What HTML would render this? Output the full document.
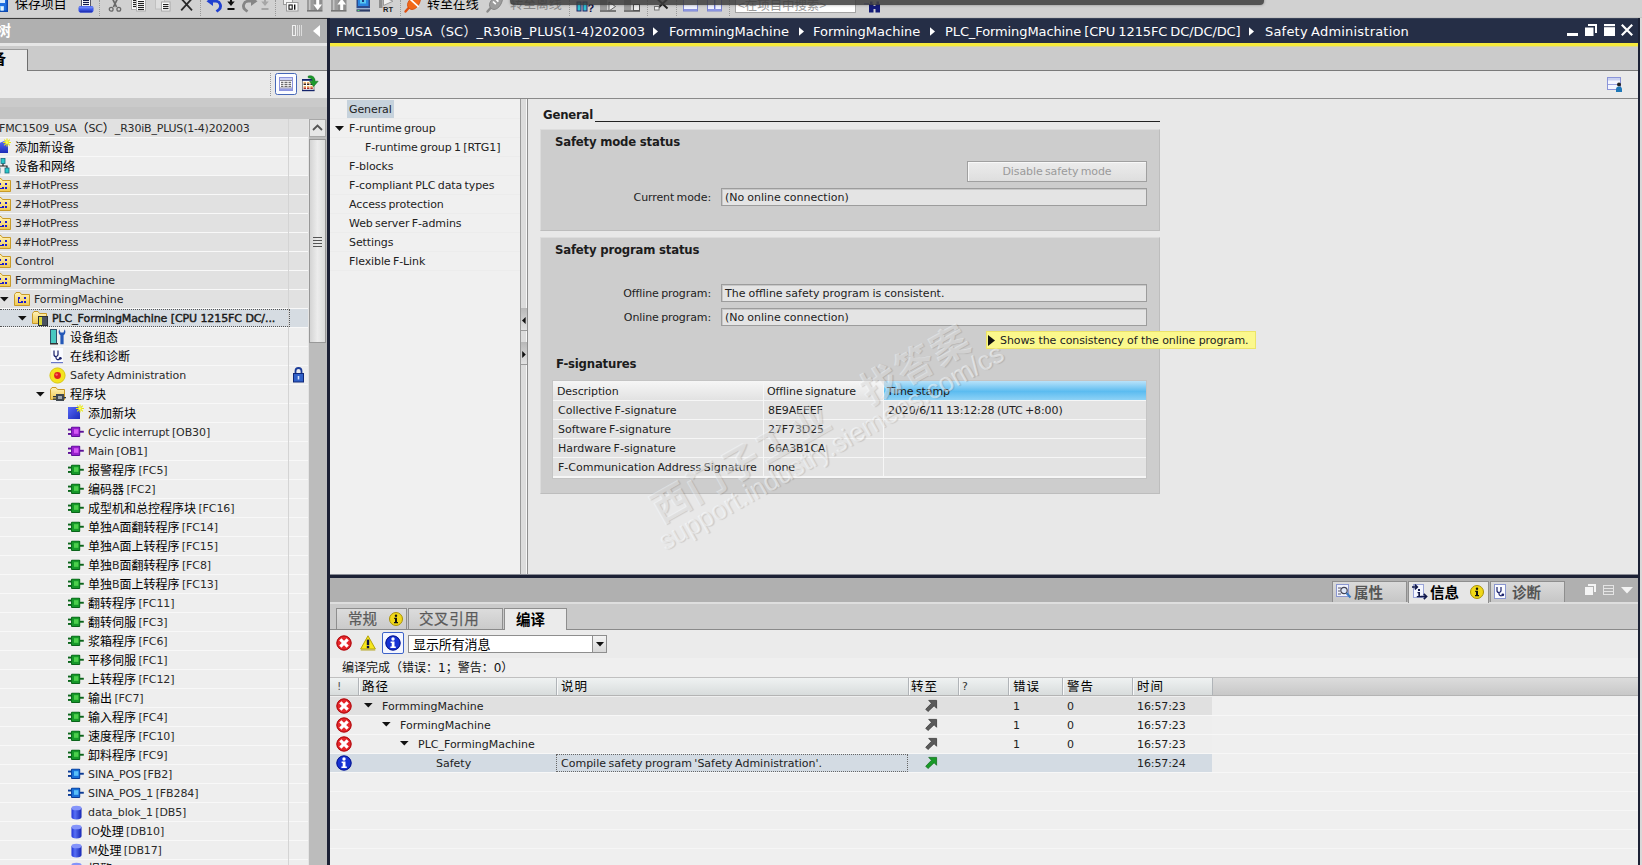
<!DOCTYPE html><html lang="zh"><head><meta charset="utf-8"><title>Safety Administration</title><style>
*{margin:0;padding:0;box-sizing:border-box}
html,body{width:1642px;height:865px;overflow:hidden;background:#e8e8e8}
body{position:relative;font-family:"DejaVu Sans","Liberation Sans","Noto Sans CJK SC",sans-serif;font-size:11px;color:#2a2a2a;line-height:1}
.a{position:absolute}
.t{position:absolute;white-space:pre;line-height:19px;height:19px;letter-spacing:-0.1px;word-spacing:-1px}
.c{font-size:12px;color:#000;position:relative;top:1px;letter-spacing:0;word-spacing:0}
svg{position:absolute;overflow:visible}
.row{position:absolute;left:0;width:308px;height:18px}
.brow{position:absolute;left:331px;width:881px;height:19px}
</style></head><body>
<svg width="0" height="0" style="position:absolute"><defs>
<linearGradient id="gfold" x1="0" y1="0" x2="0" y2="1"><stop offset="0" stop-color="#fff3b8"/><stop offset="1" stop-color="#f0c850"/></linearGradient>
<linearGradient id="gblue" x1="0" y1="0" x2="0" y2="1"><stop offset="0" stop-color="#5a6cf5"/><stop offset="1" stop-color="#1c2cb8"/></linearGradient>
<linearGradient id="gcyl" x1="0" y1="0" x2="1" y2="0"><stop offset="0" stop-color="#2034d8"/><stop offset=".35" stop-color="#5870f4"/><stop offset="1" stop-color="#1626b4"/></linearGradient>
<linearGradient id="ghead" x1="0" y1="0" x2="0" y2="1"><stop offset="0" stop-color="#f4f5f7"/><stop offset=".5" stop-color="#e3e6ea"/><stop offset="1" stop-color="#d4d8de"/></linearGradient>
<symbol id="i-folder" viewBox="0 0 16 16"><path d="M0.5 3.5 L2 1.5 H6 L7.5 3.5 H15.5 V14.5 H0.5 Z" fill="url(#gfold)" stroke="#c89a28" stroke-width="1"/><rect x="4" y="6" width="2" height="2" fill="#1a1ad0"/><rect x="4" y="8" width="1" height="4" fill="#1a1ad0"/><rect x="4" y="11" width="4" height="1" fill="#1a1ad0"/><rect x="7" y="10" width="2" height="2" fill="#1a1ad0"/><rect x="10" y="6" width="2" height="2" fill="#1a1ad0"/><rect x="10" y="10" width="2" height="2" fill="#1a1ad0"/></symbol>
<symbol id="i-plc" viewBox="0 0 16 16"><path d="M0.5 3.5 L2 1.5 H6 L7.5 3.5 H14.5 V13.5 H0.5 Z" fill="url(#gfold)" stroke="#c89a28" stroke-width="1"/><rect x="6" y="6" width="10" height="10" fill="#2b3038"/><rect x="7" y="7" width="3" height="8" fill="#d8d838"/><rect x="10" y="7" width="5" height="8" fill="#4a5260"/></symbol>
<symbol id="i-prog" viewBox="0 0 16 16"><path d="M0.5 3.5 L2 1.5 H6 L7.5 3.5 H14.5 V13.5 H0.5 Z" fill="url(#gfold)" stroke="#c89a28" stroke-width="1"/><rect x="6" y="8" width="8" height="7" fill="#404850"/><rect x="8" y="10" width="4" height="3" fill="#a0a8b0"/><rect x="3" y="10" width="3" height="1.3" fill="#303840"/><rect x="3" y="12.5" width="3" height="1.3" fill="#303840"/><rect x="14" y="11" width="2" height="1.3" fill="#303840"/></symbol>
<symbol id="i-blk" viewBox="0 0 16 12"><rect x="0" y="2.6" width="4" height="1.9" fill="var(--d)"/><rect x="0" y="7" width="4" height="1.9" fill="var(--d)"/><rect x="11.5" y="4.8" width="4.3" height="1.9" fill="var(--d)"/><rect x="3" y="0.8" width="9.2" height="10.2" rx="1" fill="var(--d)"/><rect x="3.8" y="1.4" width="7.6" height="8.6" rx=".6" fill="var(--m)"/><rect x="6" y="3.2" width="4.4" height="4.6" fill="var(--l)"/></symbol>
<symbol id="i-db" viewBox="0 0 12 16"><path d="M0.5 3 V13 A5.5 2.5 0 0 0 11.5 13 V3 Z" fill="url(#gcyl)"/><ellipse cx="6" cy="3" rx="5.5" ry="2.5" fill="#8494fa"/></symbol>
<symbol id="i-star" viewBox="0 0 10 10"><g stroke="#e8e810" stroke-width="1.4"><path d="M5 0V10M0 5H10M1.5 1.5L8.5 8.5M8.5 1.5L1.5 8.5"/></g><circle cx="5" cy="5" r="1.6" fill="#ffff60"/></symbol>
<symbol id="i-err" viewBox="0 0 16 16"><circle cx="8" cy="8" r="7.6" fill="#e6262a"/><circle cx="8" cy="8" r="7.1" fill="none" stroke="#a80c10" stroke-width="1"/><path d="M4.3 4.3L11.7 11.7M11.7 4.3L4.3 11.7" stroke="#fff" stroke-width="3.1"/></symbol>
<symbol id="i-info" viewBox="0 0 16 16"><circle cx="8" cy="8" r="7.6" fill="#1632d4"/><circle cx="8" cy="8" r="7.1" fill="none" stroke="#0a1888" stroke-width="1"/><circle cx="8" cy="4" r="1.7" fill="#fff"/><path d="M5.6 6.6H9.5V11.4H10.8V12.9H5.4V11.4H6.7V8.1H5.6Z" fill="#fff"/></symbol>
<symbol id="i-warn" viewBox="0 0 16 16"><path d="M8 0.8 L15.4 14 H0.6 Z" fill="#f6e61c" stroke="#b4a40c" stroke-width="1" stroke-linejoin="round"/><path d="M1 14.4H15L15.4 15.4H0.6Z" fill="#b8a828"/><rect x="6.8" y="4.6" width="2.4" height="5.6" fill="#0c1040"/><rect x="6.8" y="11" width="2.4" height="2.2" fill="#0c1040"/></symbol>
<symbol id="i-yinfo" viewBox="0 0 14 14"><circle cx="7" cy="7" r="6.5" fill="#f0d818" stroke="#a89008" stroke-width="1"/><circle cx="7" cy="3.8" r="1.2" fill="#111"/><path d="M5.2 5.8H8V10H9V11.2H5V10H6V7H5.2Z" fill="#111"/></symbol>
<symbol id="i-goto" viewBox="0 0 14 14"><path d="M4 1.5 H12.5 V10 L9.8 7.3 L3.2 13.5 L0.8 11 L7 4.6 Z" fill="var(--m)" stroke="var(--d)" stroke-width=".8"/></symbol>
</defs></svg>
<div class="a" style="left:0px;top:0px;width:1642px;height:18px;background:#d1d1d1;"></div>
<div class="a" style="left:0px;top:17px;width:1642px;height:1px;background:#c4c4c4;"></div>
<div class="a" style="left:0px;top:18px;width:327px;height:25px;background:#b0b0b0;"></div>
<div class="a" style="left:0px;top:18px;width:327px;height:1px;background:#3a3a3a;"></div>
<div class="a" style="left:0px;top:43px;width:327px;height:3px;background:#e6e6e6;"></div>
<div class="a" style="left:0px;top:46px;width:327px;height:25px;background:#cbcbcb;"></div>
<div class="a" style="left:0px;top:70px;width:327px;height:1px;background:#7c7c7c;"></div>
<div class="a" style="left:0px;top:49px;width:28px;height:22px;background:#e9e9e9;border-right:1px solid #6e6e6e;border-top:1px solid #9a9a9a"></div>
<div class="a" style="left:0px;top:71px;width:327px;height:27px;background:#e9e9e9;"></div>
<div class="a" style="left:0px;top:98px;width:327px;height:21px;background:#c4c4c4;"></div>
<div class="a" style="left:0px;top:98px;width:327px;height:9px;background:#cacaca;"></div>
<div class="a" style="left:0px;top:119px;width:327px;height:746px;background:#eeeeee;"></div>
<div class="a" style="left:0px;top:119px;width:308px;height:18px;background:#e1e1e1;"></div>
<div class="a" style="left:0px;top:137px;width:308px;height:1px;background:#f8f8f8;"></div>
<span class="t" style="left:-1px;top:119px;letter-spacing:-0.2px">FMC1509_USA<span class="c">（</span>SC<span class="c">）</span>_R30iB_PLUS(1-4)202003</span>
<div class="a" style="left:0px;top:138px;width:308px;height:18px;background:#eeeeee;"></div>
<div class="a" style="left:0px;top:156px;width:308px;height:1px;background:#f8f8f8;"></div>
<svg class="a" style="left:-5px;top:141px" width="14" height="12"><path d="M0 12V4L9 0L13 3V12Z" fill="url(#gblue)"/></svg>
<svg class="a" style="left:3px;top:138px;" width="8" height="9"><use href="#i-star"/></svg>
<span class="t" style="left:15px;top:138px;"><span class="c">添加新设备</span></span>
<div class="a" style="left:0px;top:157px;width:308px;height:18px;background:#eeeeee;"></div>
<div class="a" style="left:0px;top:175px;width:308px;height:1px;background:#f8f8f8;"></div>
<svg class="a" style="left:-5px;top:158px" width="16" height="16"><path d="M8 5V8M3 11V8H12V11" stroke="#222" stroke-width="1.2" fill="none"/><rect x="6" y="0.5" width="4" height="5" fill="#28c8c8" stroke="#1a6a80" stroke-width=".8"/><rect x="1" y="10" width="4" height="5" fill="#28c8c8" stroke="#1a6a80" stroke-width=".8"/><rect x="10" y="10" width="4" height="5" fill="#28c8c8" stroke="#1a6a80" stroke-width=".8"/></svg>
<span class="t" style="left:15px;top:157px;"><span class="c">设备和网络</span></span>
<div class="a" style="left:0px;top:176px;width:308px;height:18px;background:#e1e1e1;"></div>
<div class="a" style="left:0px;top:194px;width:308px;height:1px;background:#f8f8f8;"></div>
<svg class="a" style="left:-5px;top:177px;" width="16" height="16"><use href="#i-folder"/></svg>
<span class="t" style="left:15px;top:176px;">1#HotPress</span>
<div class="a" style="left:0px;top:195px;width:308px;height:18px;background:#e1e1e1;"></div>
<div class="a" style="left:0px;top:213px;width:308px;height:1px;background:#f8f8f8;"></div>
<svg class="a" style="left:-5px;top:196px;" width="16" height="16"><use href="#i-folder"/></svg>
<span class="t" style="left:15px;top:195px;">2#HotPress</span>
<div class="a" style="left:0px;top:214px;width:308px;height:18px;background:#e1e1e1;"></div>
<div class="a" style="left:0px;top:232px;width:308px;height:1px;background:#f8f8f8;"></div>
<svg class="a" style="left:-5px;top:215px;" width="16" height="16"><use href="#i-folder"/></svg>
<span class="t" style="left:15px;top:214px;">3#HotPress</span>
<div class="a" style="left:0px;top:233px;width:308px;height:18px;background:#e1e1e1;"></div>
<div class="a" style="left:0px;top:251px;width:308px;height:1px;background:#f8f8f8;"></div>
<svg class="a" style="left:-5px;top:234px;" width="16" height="16"><use href="#i-folder"/></svg>
<span class="t" style="left:15px;top:233px;">4#HotPress</span>
<div class="a" style="left:0px;top:252px;width:308px;height:18px;background:#e1e1e1;"></div>
<div class="a" style="left:0px;top:270px;width:308px;height:1px;background:#f8f8f8;"></div>
<svg class="a" style="left:-5px;top:253px;" width="16" height="16"><use href="#i-folder"/></svg>
<span class="t" style="left:15px;top:252px;">Control</span>
<div class="a" style="left:0px;top:271px;width:308px;height:18px;background:#e1e1e1;"></div>
<div class="a" style="left:0px;top:289px;width:308px;height:1px;background:#f8f8f8;"></div>
<svg class="a" style="left:-5px;top:272px;" width="16" height="16"><use href="#i-folder"/></svg>
<span class="t" style="left:15px;top:271px;">FormmingMachine</span>
<div class="a" style="left:0px;top:290px;width:308px;height:18px;background:#e1e1e1;"></div>
<div class="a" style="left:0px;top:308px;width:308px;height:1px;background:#f8f8f8;"></div>
<svg class="a" style="left:0px;top:297px" width="9" height="5"><path d="M0 0H8.6L4.3 4.6Z" fill="#111"/></svg>
<svg class="a" style="left:14px;top:291px;" width="16" height="16"><use href="#i-folder"/></svg>
<span class="t" style="left:34px;top:290px;">FormingMachine</span>
<div class="a" style="left:0px;top:309px;width:308px;height:18px;background:#d6dce2;"></div>
<div class="a" style="left:0px;top:327px;width:308px;height:1px;background:#f8f8f8;"></div>
<div class="a" style="left:0px;top:309px;width:290px;height:18px;background:transparent;border:1px dotted #555;border-left:none"></div>
<svg class="a" style="left:18px;top:316px" width="9" height="5"><path d="M0 0H8.6L4.3 4.6Z" fill="#111"/></svg>
<svg class="a" style="left:32px;top:310px;" width="16" height="16"><use href="#i-plc"/></svg>
<span class="t" style="left:52px;top:309px;color:#1a1a1a;-webkit-text-stroke:0.45px #1a1a1a;letter-spacing:-0.08px;word-spacing:0">PLC_FormingMachine [CPU 1215FC DC/...</span>
<div class="a" style="left:0px;top:328px;width:308px;height:18px;background:#eeeeee;"></div>
<div class="a" style="left:0px;top:346px;width:308px;height:1px;background:#f8f8f8;"></div>
<svg class="a" style="left:50px;top:329px" width="16" height="16"><rect x="0.5" y="0.5" width="6" height="14" fill="#48c8c0" stroke="#30506a" stroke-width="1"/><rect x="0" y="14" width="8" height="1.5" fill="#333"/><path d="M9.3 0.3C8 2.6 8.6 5.2 10.4 6.2V15.2H13.6V6.2C15.4 5.2 16 2.6 14.7 0.3L13.5 3.4H10.5Z" fill="#2458b8"/></svg>
<span class="t" style="left:70px;top:328px;"><span class="c">设备组态</span></span>
<div class="a" style="left:0px;top:347px;width:308px;height:18px;background:#eeeeee;"></div>
<div class="a" style="left:0px;top:365px;width:308px;height:1px;background:#f8f8f8;"></div>
<svg class="a" style="left:51px;top:348px" width="13" height="16"><rect x="0" y="0" width="12" height="14.5" fill="#fafbff"/><rect x="0" y="14" width="12" height="1.2" fill="#6a78c8"/><path d="M3 2.5V6.5A2 2 0 0 0 7 6.5V2.5M5 8.5V10A2 2 0 0 0 8.5 11" stroke="#18206a" stroke-width="1.2" fill="none"/><circle cx="9.3" cy="10.3" r="1.4" fill="#18206a"/></svg>
<span class="t" style="left:70px;top:347px;"><span class="c">在线和诊断</span></span>
<div class="a" style="left:0px;top:366px;width:308px;height:18px;background:#eeeeee;"></div>
<div class="a" style="left:0px;top:384px;width:308px;height:1px;background:#f8f8f8;"></div>
<svg class="a" style="left:49px;top:367px" width="17" height="17"><circle cx="8.5" cy="8.5" r="7.6" fill="#f4e420" stroke="#d8c810" stroke-width="1"/><circle cx="8.5" cy="8.5" r="3.4" fill="#e02020"/><circle cx="7.6" cy="7.6" r="1.2" fill="#ff7060"/></svg>
<span class="t" style="left:70px;top:366px;">Safety Administration</span>
<div class="a" style="left:0px;top:385px;width:308px;height:18px;background:#eeeeee;"></div>
<div class="a" style="left:0px;top:403px;width:308px;height:1px;background:#f8f8f8;"></div>
<svg class="a" style="left:36px;top:392px" width="9" height="5"><path d="M0 0H8.6L4.3 4.6Z" fill="#111"/></svg>
<svg class="a" style="left:50px;top:386px;" width="16" height="16"><use href="#i-prog"/></svg>
<span class="t" style="left:70px;top:385px;"><span class="c">程序块</span></span>
<div class="a" style="left:0px;top:404px;width:308px;height:18px;background:#eeeeee;"></div>
<div class="a" style="left:0px;top:422px;width:308px;height:1px;background:#f8f8f8;"></div>
<div class="a" style="left:68px;top:407px;width:12px;height:12px;background:linear-gradient(135deg,#5668f8,#1c2cb8);"></div>
<svg class="a" style="left:76px;top:404px;" width="8" height="9"><use href="#i-star"/></svg>
<span class="t" style="left:88px;top:404px;"><span class="c">添加新块</span></span>
<div class="a" style="left:0px;top:423px;width:308px;height:18px;background:#eeeeee;"></div>
<div class="a" style="left:0px;top:441px;width:308px;height:1px;background:#f8f8f8;"></div>
<svg class="a" style="left:68px;top:426px;--d:#5c1098;--m:#9620cc;--l:#d458f4" width="16" height="12"><use href="#i-blk"/></svg>
<span class="t" style="left:88px;top:423px;">Cyclic interrupt [OB30]</span>
<div class="a" style="left:0px;top:442px;width:308px;height:18px;background:#eeeeee;"></div>
<div class="a" style="left:0px;top:460px;width:308px;height:1px;background:#f8f8f8;"></div>
<svg class="a" style="left:68px;top:445px;--d:#5c1098;--m:#9620cc;--l:#d458f4" width="16" height="12"><use href="#i-blk"/></svg>
<span class="t" style="left:88px;top:442px;">Main [OB1]</span>
<div class="a" style="left:0px;top:461px;width:308px;height:18px;background:#eeeeee;"></div>
<div class="a" style="left:0px;top:479px;width:308px;height:1px;background:#f8f8f8;"></div>
<svg class="a" style="left:68px;top:464px;--d:#0a641a;--m:#16982a;--l:#4cd04c" width="16" height="12"><use href="#i-blk"/></svg>
<span class="t" style="left:88px;top:461px;"><span class="c">报警程序</span> [FC5]</span>
<div class="a" style="left:0px;top:480px;width:308px;height:18px;background:#eeeeee;"></div>
<div class="a" style="left:0px;top:498px;width:308px;height:1px;background:#f8f8f8;"></div>
<svg class="a" style="left:68px;top:483px;--d:#0a641a;--m:#16982a;--l:#4cd04c" width="16" height="12"><use href="#i-blk"/></svg>
<span class="t" style="left:88px;top:480px;"><span class="c">编码器</span> [FC2]</span>
<div class="a" style="left:0px;top:499px;width:308px;height:18px;background:#eeeeee;"></div>
<div class="a" style="left:0px;top:517px;width:308px;height:1px;background:#f8f8f8;"></div>
<svg class="a" style="left:68px;top:502px;--d:#0a641a;--m:#16982a;--l:#4cd04c" width="16" height="12"><use href="#i-blk"/></svg>
<span class="t" style="left:88px;top:499px;"><span class="c">成型机和总控程序块</span> [FC16]</span>
<div class="a" style="left:0px;top:518px;width:308px;height:18px;background:#eeeeee;"></div>
<div class="a" style="left:0px;top:536px;width:308px;height:1px;background:#f8f8f8;"></div>
<svg class="a" style="left:68px;top:521px;--d:#0a641a;--m:#16982a;--l:#4cd04c" width="16" height="12"><use href="#i-blk"/></svg>
<span class="t" style="left:88px;top:518px;"><span class="c">单独</span>A<span class="c">面翻转程序</span> [FC14]</span>
<div class="a" style="left:0px;top:537px;width:308px;height:18px;background:#eeeeee;"></div>
<div class="a" style="left:0px;top:555px;width:308px;height:1px;background:#f8f8f8;"></div>
<svg class="a" style="left:68px;top:540px;--d:#0a641a;--m:#16982a;--l:#4cd04c" width="16" height="12"><use href="#i-blk"/></svg>
<span class="t" style="left:88px;top:537px;"><span class="c">单独</span>A<span class="c">面上转程序</span> [FC15]</span>
<div class="a" style="left:0px;top:556px;width:308px;height:18px;background:#eeeeee;"></div>
<div class="a" style="left:0px;top:574px;width:308px;height:1px;background:#f8f8f8;"></div>
<svg class="a" style="left:68px;top:559px;--d:#0a641a;--m:#16982a;--l:#4cd04c" width="16" height="12"><use href="#i-blk"/></svg>
<span class="t" style="left:88px;top:556px;"><span class="c">单独</span>B<span class="c">面翻转程序</span> [FC8]</span>
<div class="a" style="left:0px;top:575px;width:308px;height:18px;background:#eeeeee;"></div>
<div class="a" style="left:0px;top:593px;width:308px;height:1px;background:#f8f8f8;"></div>
<svg class="a" style="left:68px;top:578px;--d:#0a641a;--m:#16982a;--l:#4cd04c" width="16" height="12"><use href="#i-blk"/></svg>
<span class="t" style="left:88px;top:575px;"><span class="c">单独</span>B<span class="c">面上转程序</span> [FC13]</span>
<div class="a" style="left:0px;top:594px;width:308px;height:18px;background:#eeeeee;"></div>
<div class="a" style="left:0px;top:612px;width:308px;height:1px;background:#f8f8f8;"></div>
<svg class="a" style="left:68px;top:597px;--d:#0a641a;--m:#16982a;--l:#4cd04c" width="16" height="12"><use href="#i-blk"/></svg>
<span class="t" style="left:88px;top:594px;"><span class="c">翻转程序</span> [FC11]</span>
<div class="a" style="left:0px;top:613px;width:308px;height:18px;background:#eeeeee;"></div>
<div class="a" style="left:0px;top:631px;width:308px;height:1px;background:#f8f8f8;"></div>
<svg class="a" style="left:68px;top:616px;--d:#0a641a;--m:#16982a;--l:#4cd04c" width="16" height="12"><use href="#i-blk"/></svg>
<span class="t" style="left:88px;top:613px;"><span class="c">翻转伺服</span> [FC3]</span>
<div class="a" style="left:0px;top:632px;width:308px;height:18px;background:#eeeeee;"></div>
<div class="a" style="left:0px;top:650px;width:308px;height:1px;background:#f8f8f8;"></div>
<svg class="a" style="left:68px;top:635px;--d:#0a641a;--m:#16982a;--l:#4cd04c" width="16" height="12"><use href="#i-blk"/></svg>
<span class="t" style="left:88px;top:632px;"><span class="c">浆箱程序</span> [FC6]</span>
<div class="a" style="left:0px;top:651px;width:308px;height:18px;background:#eeeeee;"></div>
<div class="a" style="left:0px;top:669px;width:308px;height:1px;background:#f8f8f8;"></div>
<svg class="a" style="left:68px;top:654px;--d:#0a641a;--m:#16982a;--l:#4cd04c" width="16" height="12"><use href="#i-blk"/></svg>
<span class="t" style="left:88px;top:651px;"><span class="c">平移伺服</span> [FC1]</span>
<div class="a" style="left:0px;top:670px;width:308px;height:18px;background:#eeeeee;"></div>
<div class="a" style="left:0px;top:688px;width:308px;height:1px;background:#f8f8f8;"></div>
<svg class="a" style="left:68px;top:673px;--d:#0a641a;--m:#16982a;--l:#4cd04c" width="16" height="12"><use href="#i-blk"/></svg>
<span class="t" style="left:88px;top:670px;"><span class="c">上转程序</span> [FC12]</span>
<div class="a" style="left:0px;top:689px;width:308px;height:18px;background:#eeeeee;"></div>
<div class="a" style="left:0px;top:707px;width:308px;height:1px;background:#f8f8f8;"></div>
<svg class="a" style="left:68px;top:692px;--d:#0a641a;--m:#16982a;--l:#4cd04c" width="16" height="12"><use href="#i-blk"/></svg>
<span class="t" style="left:88px;top:689px;"><span class="c">输出</span> [FC7]</span>
<div class="a" style="left:0px;top:708px;width:308px;height:18px;background:#eeeeee;"></div>
<div class="a" style="left:0px;top:726px;width:308px;height:1px;background:#f8f8f8;"></div>
<svg class="a" style="left:68px;top:711px;--d:#0a641a;--m:#16982a;--l:#4cd04c" width="16" height="12"><use href="#i-blk"/></svg>
<span class="t" style="left:88px;top:708px;"><span class="c">输入程序</span> [FC4]</span>
<div class="a" style="left:0px;top:727px;width:308px;height:18px;background:#eeeeee;"></div>
<div class="a" style="left:0px;top:745px;width:308px;height:1px;background:#f8f8f8;"></div>
<svg class="a" style="left:68px;top:730px;--d:#0a641a;--m:#16982a;--l:#4cd04c" width="16" height="12"><use href="#i-blk"/></svg>
<span class="t" style="left:88px;top:727px;"><span class="c">速度程序</span> [FC10]</span>
<div class="a" style="left:0px;top:746px;width:308px;height:18px;background:#eeeeee;"></div>
<div class="a" style="left:0px;top:764px;width:308px;height:1px;background:#f8f8f8;"></div>
<svg class="a" style="left:68px;top:749px;--d:#0a641a;--m:#16982a;--l:#4cd04c" width="16" height="12"><use href="#i-blk"/></svg>
<span class="t" style="left:88px;top:746px;"><span class="c">卸料程序</span> [FC9]</span>
<div class="a" style="left:0px;top:765px;width:308px;height:18px;background:#eeeeee;"></div>
<div class="a" style="left:0px;top:783px;width:308px;height:1px;background:#f8f8f8;"></div>
<svg class="a" style="left:68px;top:768px;--d:#0a3a94;--m:#1870d8;--l:#58c0fa" width="16" height="12"><use href="#i-blk"/></svg>
<span class="t" style="left:88px;top:765px;">SINA_POS [FB2]</span>
<div class="a" style="left:0px;top:784px;width:308px;height:18px;background:#eeeeee;"></div>
<div class="a" style="left:0px;top:802px;width:308px;height:1px;background:#f8f8f8;"></div>
<svg class="a" style="left:68px;top:787px;--d:#0a3a94;--m:#1870d8;--l:#58c0fa" width="16" height="12"><use href="#i-blk"/></svg>
<span class="t" style="left:88px;top:784px;">SINA_POS_1 [FB284]</span>
<div class="a" style="left:0px;top:803px;width:308px;height:18px;background:#eeeeee;"></div>
<div class="a" style="left:0px;top:821px;width:308px;height:1px;background:#f8f8f8;"></div>
<svg class="a" style="left:71px;top:805px;" width="11" height="15"><use href="#i-db"/></svg>
<span class="t" style="left:88px;top:803px;">data_blok_1 [DB5]</span>
<div class="a" style="left:0px;top:822px;width:308px;height:18px;background:#eeeeee;"></div>
<div class="a" style="left:0px;top:840px;width:308px;height:1px;background:#f8f8f8;"></div>
<svg class="a" style="left:71px;top:824px;" width="11" height="15"><use href="#i-db"/></svg>
<span class="t" style="left:88px;top:822px;">IO<span class="c">处理</span> [DB10]</span>
<div class="a" style="left:0px;top:841px;width:308px;height:18px;background:#eeeeee;"></div>
<div class="a" style="left:0px;top:859px;width:308px;height:1px;background:#f8f8f8;"></div>
<svg class="a" style="left:71px;top:843px;" width="11" height="15"><use href="#i-db"/></svg>
<span class="t" style="left:88px;top:841px;">M<span class="c">处理</span> [DB17]</span>
<div class="a" style="left:0px;top:860px;width:308px;height:18px;background:#eeeeee;"></div>
<div class="a" style="left:0px;top:878px;width:308px;height:1px;background:#f8f8f8;"></div>
<svg class="a" style="left:71px;top:862px;" width="11" height="15"><use href="#i-db"/></svg>
<span class="t" style="left:88px;top:860px;"><span class="c">报警</span> [DB1]</span>
<div class="a" style="left:288px;top:119px;width:1px;height:746px;background:#d4d4d4;"></div>
<svg class="a" style="left:293px;top:366px" width="11" height="17"><path d="M2.5 8V5A3 3 0 0 1 8.5 5V8" stroke="#1c3c98" stroke-width="1.8" fill="none"/><rect x="0.5" y="7.5" width="10" height="8.5" fill="#3060c8" stroke="#102878" stroke-width="1"/><rect x="4.7" y="10" width="1.6" height="3.5" fill="#cfe0ff"/></svg>
<div class="a" style="left:308px;top:119px;width:19px;height:746px;background:#bcbcbc;"></div>
<div class="a" style="left:308px;top:119px;width:1px;height:746px;background:#e4e4e4;"></div>
<div class="a" style="left:309px;top:119px;width:17px;height:18px;background:#e6e6e6;border:1px solid #a8a8a8"></div>
<svg class="a" style="left:312px;top:124px" width="11" height="7"><path d="M1 6L5.5 1.5L10 6" stroke="#555" stroke-width="1.8" fill="none"/></svg>
<div class="a" style="left:309px;top:139px;width:17px;height:204px;background:linear-gradient(90deg,#d4d4d4,#ececec 50%,#dcdcdc);border:1px solid #989898"></div>
<div class="a" style="left:313px;top:237px;width:9px;height:1px;background:#555;"></div>
<div class="a" style="left:313px;top:240px;width:9px;height:1px;background:#555;"></div>
<div class="a" style="left:313px;top:243px;width:9px;height:1px;background:#555;"></div>
<div class="a" style="left:313px;top:246px;width:9px;height:1px;background:#555;"></div>
<div class="a" style="left:327px;top:18px;width:3px;height:847px;background:#1c2135;"></div>
<div class="a" style="left:330px;top:18px;width:1308px;height:25px;background:#252e46;"></div>
<div class="a" style="left:330px;top:18px;width:1308px;height:1px;background:#3a4358;"></div>
<div class="a" style="left:330px;top:43px;width:1308px;height:3px;background:#f6ea3c;"></div>
<div class="a" style="left:330px;top:46px;width:1308px;height:1px;background:#dcd890;"></div>
<div class="a" style="left:330px;top:47px;width:1308px;height:23px;background:#cbcbcb;"></div>
<div class="a" style="left:330px;top:70px;width:1308px;height:1px;background:#7a7a7a;"></div>
<div class="a" style="left:330px;top:71px;width:1308px;height:27px;background:#e9e9e9;"></div>
<div class="a" style="left:330px;top:98px;width:1308px;height:1px;background:#8a8a8a;"></div>
<div class="a" style="left:330px;top:99px;width:1308px;height:475px;background:#e8e8e8;"></div>
<div class="a" style="left:1638px;top:18px;width:2px;height:847px;background:#1c2135;"></div>
<div class="a" style="left:1640px;top:18px;width:2px;height:847px;background:#d8d8d8;"></div>
<span class="t" style="left:336px;top:19px;font-size:13px;color:#fff;line-height:25px;height:25px;letter-spacing:0.2px">FMC1509_USA<span style="font-size:13px">（</span>SC<span style="font-size:13px">）</span>_R30iB_PLUS(1-4)202003</span>
<span class="t" style="left:669px;top:19px;font-size:13px;color:#fff;line-height:25px;height:25px;letter-spacing:0px">FormmingMachine</span>
<span class="t" style="left:813px;top:19px;font-size:13px;color:#fff;line-height:25px;height:25px;letter-spacing:0px">FormingMachine</span>
<span class="t" style="left:945px;top:19px;font-size:13px;color:#fff;line-height:25px;height:25px;letter-spacing:-0.1px">PLC_FormingMachine [CPU 1215FC DC/DC/DC]</span>
<span class="t" style="left:1265px;top:19px;font-size:13px;color:#fff;line-height:25px;height:25px;letter-spacing:0.2px">Safety Administration</span>
<svg class="a" style="left:653px;top:27px" width="6" height="9"><path d="M0 0.3L5 4.5L0 8.7Z" fill="#fff"/></svg>
<svg class="a" style="left:799px;top:27px" width="6" height="9"><path d="M0 0.3L5 4.5L0 8.7Z" fill="#fff"/></svg>
<svg class="a" style="left:930px;top:27px" width="6" height="9"><path d="M0 0.3L5 4.5L0 8.7Z" fill="#fff"/></svg>
<svg class="a" style="left:1249px;top:27px" width="6" height="9"><path d="M0 0.3L5 4.5L0 8.7Z" fill="#fff"/></svg>
<div class="a" style="left:1567px;top:33px;width:11px;height:3px;background:#fff;"></div>
<svg class="a" style="left:1585px;top:24px" width="12" height="12"><path d="M3 0H12V9H10V2H3Z" fill="#fff"/><rect x="0" y="3.5" width="8.5" height="8.5" fill="#fff"/></svg>
<svg class="a" style="left:1604px;top:24px" width="12" height="12"><rect x="0" y="0" width="11" height="12" fill="#fff"/><rect x="0" y="2.2" width="11" height="1" fill="#252e46"/></svg>
<svg class="a" style="left:1621px;top:24px" width="12" height="12"><path d="M0.8 0.8L11.2 11.2M11.2 0.8L0.8 11.2" stroke="#fff" stroke-width="2.2"/></svg>
<svg class="a" style="left:1607px;top:77px" width="16" height="16"><rect x="0.5" y="0.5" width="13" height="12" fill="#f4f6ff" stroke="#8a94d8" stroke-width="1"/><rect x="1" y="1" width="12" height="2.5" fill="#c8d0f0"/><rect x="1" y="7" width="12" height="1" fill="#9aa4e0"/><circle cx="12" cy="7.5" r="2" fill="#222"/><path d="M9 15V12.5A3 3 0 0 1 15 12.5V15Z" fill="#1e78b8"/></svg>
<div class="a" style="left:330px;top:99px;width:190px;height:475px;background:#f0f0f0;"></div>
<div class="a" style="left:330px;top:118px;width:190px;height:1px;background:#ececec;"></div>
<div class="a" style="left:330px;top:137px;width:190px;height:1px;background:#ececec;"></div>
<div class="a" style="left:330px;top:156px;width:190px;height:1px;background:#ececec;"></div>
<div class="a" style="left:330px;top:175px;width:190px;height:1px;background:#ececec;"></div>
<div class="a" style="left:330px;top:194px;width:190px;height:1px;background:#ececec;"></div>
<div class="a" style="left:330px;top:213px;width:190px;height:1px;background:#ececec;"></div>
<div class="a" style="left:330px;top:232px;width:190px;height:1px;background:#ececec;"></div>
<div class="a" style="left:330px;top:251px;width:190px;height:1px;background:#ececec;"></div>
<div class="a" style="left:330px;top:270px;width:190px;height:1px;background:#ececec;"></div>
<div class="a" style="left:347px;top:100px;width:47px;height:18px;background:#c6d2dc;"></div>
<span class="t " style="left:349px;top:100px;color:#222">General</span>
<span class="t " style="left:349px;top:119px;color:#222">F-runtime group</span>
<span class="t " style="left:365px;top:138px;color:#222">F-runtime group 1 [RTG1]</span>
<span class="t " style="left:349px;top:157px;color:#222">F-blocks</span>
<span class="t " style="left:349px;top:176px;color:#222">F-compliant PLC data types</span>
<span class="t " style="left:349px;top:195px;color:#222">Access protection</span>
<span class="t " style="left:349px;top:214px;color:#222">Web server F-admins</span>
<span class="t " style="left:349px;top:233px;color:#222">Settings</span>
<span class="t " style="left:349px;top:252px;color:#222">Flexible F-Link</span>
<svg class="a" style="left:335px;top:126px" width="9" height="5"><path d="M0 0H9L4.5 5Z" fill="#111"/></svg>
<div class="a" style="left:520px;top:99px;width:8px;height:475px;background:#dcdcdc;border-left:1px solid #9a9a9a;border-right:1px solid #8e8e8e"></div>
<div class="a" style="left:526px;top:99px;width:1px;height:475px;background:#f6f6f6;"></div>
<div class="a" style="left:521px;top:308px;width:6px;height:23px;background:linear-gradient(#b8b8b8,#e2e2e2);border-bottom:1px solid #9a9a9a"></div>
<svg class="a" style="left:522px;top:317px" width="4" height="7"><path d="M3.6 0V7L0 3.5Z" fill="#111"/></svg>
<div class="a" style="left:521px;top:342px;width:6px;height:23px;background:linear-gradient(#b8b8b8,#e2e2e2);border-bottom:1px solid #9a9a9a"></div>
<svg class="a" style="left:522px;top:351px" width="4" height="7"><path d="M0.2 0V7L3.8 3.5Z" fill="#111"/></svg>
<span class="t" style="left:543px;top:105px;font-size:13px;font-weight:bold;color:#1c1c1c;font-family:DejaVu Sans Condensed,Liberation Sans,sans-serif;letter-spacing:-0.2px">General</span>
<div class="a" style="left:595px;top:121px;width:565px;height:1px;background:#222;"></div>
<div class="a" style="left:540px;top:129px;width:620px;height:102px;background:#cdcdcd;border:1px solid #bdbdbd;border-top-color:#dcdcdc;border-left-color:#dcdcdc"></div>
<div class="a" style="left:540px;top:237px;width:620px;height:257px;background:#cdcdcd;border:1px solid #bdbdbd;border-top-color:#dcdcdc;border-left-color:#dcdcdc"></div>
<span class="t" style="left:555px;top:132px;font-size:13px;font-weight:bold;color:#1c1c1c;font-family:DejaVu Sans Condensed,Liberation Sans,sans-serif;letter-spacing:-0.2px;word-spacing:0">Safety mode status</span>
<span class="t" style="left:555px;top:240px;font-size:13px;font-weight:bold;color:#1c1c1c;font-family:DejaVu Sans Condensed,Liberation Sans,sans-serif;letter-spacing:-0.2px;word-spacing:0">Safety program status</span>
<span class="t" style="left:556px;top:354px;font-size:13px;font-weight:bold;color:#1c1c1c;font-family:DejaVu Sans Condensed,Liberation Sans,sans-serif;letter-spacing:-0.2px;word-spacing:0">F-signatures</span>
<div class="a" style="left:967px;top:161px;width:180px;height:21px;background:linear-gradient(#ececec,#dedede);border:1px solid #a0a0a0;box-shadow:inset 1px 1px 0 #f8f8f8"></div>
<span class="t" style="left:967px;top:162px;width:180px;text-align:center;color:#9a9a9a">Disable safety mode</span>
<div class="a" style="left:721px;top:188px;width:426px;height:18px;background:#e4e4e4;border:1px solid #9c9c9c;box-shadow:inset 1px 1px 0 #c8c8c8"></div>
<span class="t" style="left:510px;width:201px;text-align:right;top:188px;color:#222">Current mode:</span>
<span class="t " style="left:725px;top:188px;color:#222;letter-spacing:0;word-spacing:-.5px">(No online connection)</span>
<div class="a" style="left:721px;top:284px;width:426px;height:18px;background:#e4e4e4;border:1px solid #9c9c9c;box-shadow:inset 1px 1px 0 #c8c8c8"></div>
<span class="t" style="left:510px;width:201px;text-align:right;top:284px;color:#222">Offline program:</span>
<span class="t " style="left:725px;top:284px;color:#222;letter-spacing:0;word-spacing:-.5px">The offline safety program is consistent.</span>
<div class="a" style="left:721px;top:308px;width:426px;height:18px;background:#e4e4e4;border:1px solid #9c9c9c;box-shadow:inset 1px 1px 0 #c8c8c8"></div>
<span class="t" style="left:510px;width:201px;text-align:right;top:308px;color:#222">Online program:</span>
<span class="t " style="left:725px;top:308px;color:#222;letter-spacing:0;word-spacing:-.5px">(No online connection)</span>
<div class="a" style="left:552px;top:380px;width:595px;height:99px;background:#f6f6f6;border:1px solid #c4c4c4"></div>
<div class="a" style="left:553px;top:381px;width:210px;height:19px;background:linear-gradient(#f6f6f6,#e2e2e2);"></div>
<div class="a" style="left:764px;top:381px;width:119px;height:19px;background:linear-gradient(#f6f6f6,#e2e2e2);"></div>
<div class="a" style="left:884px;top:381px;width:262px;height:19px;background:linear-gradient(#b8e2fa,#5cbcf0 55%,#8ed2f6);"></div>
<div class="a" style="left:553px;top:401px;width:210px;height:18px;background:#e3e3e3;"></div>
<div class="a" style="left:764px;top:401px;width:119px;height:18px;background:#e3e3e3;"></div>
<div class="a" style="left:884px;top:401px;width:262px;height:18px;background:#e3e3e3;"></div>
<div class="a" style="left:553px;top:420px;width:210px;height:18px;background:#e3e3e3;"></div>
<div class="a" style="left:764px;top:420px;width:119px;height:18px;background:#e3e3e3;"></div>
<div class="a" style="left:884px;top:420px;width:262px;height:18px;background:#e3e3e3;"></div>
<div class="a" style="left:553px;top:439px;width:210px;height:18px;background:#e3e3e3;"></div>
<div class="a" style="left:764px;top:439px;width:119px;height:18px;background:#e3e3e3;"></div>
<div class="a" style="left:884px;top:439px;width:262px;height:18px;background:#e3e3e3;"></div>
<div class="a" style="left:553px;top:458px;width:210px;height:18px;background:#e3e3e3;"></div>
<div class="a" style="left:764px;top:458px;width:119px;height:18px;background:#e3e3e3;"></div>
<div class="a" style="left:884px;top:458px;width:262px;height:18px;background:#e3e3e3;"></div>
<span class="t " style="left:557px;top:382px;color:#222">Description</span>
<span class="t " style="left:767px;top:382px;color:#222">Offline signature</span>
<span class="t " style="left:887px;top:382px;color:#222">Time stamp</span>
<span class="t " style="left:558px;top:401px;color:#222;letter-spacing:0">Collective F-signature</span>
<span class="t " style="left:768px;top:401px;color:#222">8E9AEEEF</span>
<span class="t " style="left:888px;top:401px;color:#222">2020/6/11 13:12:28 (UTC +8:00)</span>
<span class="t " style="left:558px;top:420px;color:#222;letter-spacing:0">Software F-signature</span>
<span class="t " style="left:768px;top:420px;color:#222">27F73D25</span>
<span class="t " style="left:558px;top:439px;color:#222;letter-spacing:0">Hardware F-signature</span>
<span class="t " style="left:768px;top:439px;color:#222">66A3B1CA</span>
<span class="t " style="left:558px;top:458px;color:#222;letter-spacing:0">F-Communication Address Signature</span>
<span class="t " style="left:768px;top:458px;color:#222">none</span>
<div class="a" style="left:986px;top:331px;width:270px;height:18px;background:#fbf88c;border:1px solid #ece468"></div>
<svg class="a" style="left:988px;top:335px" width="7" height="11"><path d="M0 0L7 5.5L0 11Z" fill="#111"/></svg>
<span class="t " style="left:1000px;top:331px;color:#222;letter-spacing:-0.08px;word-spacing:0">Shows the consistency of the online program.</span>
<span style="position:absolute;white-space:pre;transform-origin:0 50%;text-shadow:1px 1px 1px rgba(0,0,0,.13);left:652.6px;top:489.8px;height:40px;line-height:40px;font-size:38px;font-family:'Noto Sans CJK SC',sans-serif;color:rgba(255,255,255,.42);font-weight:bold;letter-spacing:2px;transform:rotate(-29.46deg)">西门子工业　找答案</span>
<span style="position:absolute;white-space:pre;transform-origin:0 50%;text-shadow:1px 1px 1px rgba(0,0,0,.13);left:661px;top:529.5px;height:27px;line-height:27px;font-size:27px;font-family:'Liberation Sans',sans-serif;color:rgba(255,255,255,.5);transform:rotate(-29.4deg)">support.industry.siemens.com/cs</span>
<div class="a" style="left:330px;top:574px;width:1308px;height:1px;background:#8a8c96;"></div>
<div class="a" style="left:330px;top:575px;width:1308px;height:3px;background:#1c2135;"></div>
<div class="a" style="left:330px;top:578px;width:1308px;height:24px;background:#b0b0b0;"></div>
<div class="a" style="left:330px;top:602px;width:1308px;height:2px;background:#dedede;"></div>
<div class="a" style="left:330px;top:604px;width:1308px;height:25px;background:#cacaca;"></div>
<div class="a" style="left:330px;top:629px;width:1308px;height:1px;background:#8a8a8a;"></div>
<div class="a" style="left:330px;top:630px;width:1308px;height:235px;background:#efefef;"></div>
<div class="a" style="left:330px;top:630px;width:1308px;height:28px;background:#ebebeb;"></div>
<div class="a" style="left:1332px;top:581px;width:75px;height:21px;background:linear-gradient(#dadada,#c6c6c6);border:1px solid #8e8e8e;border-bottom:none"></div>
<div class="a" style="left:1408px;top:581px;width:81px;height:22px;background:#e6e6e6;border:1px solid #8e8e8e;border-bottom:none"></div>
<div class="a" style="left:1490px;top:581px;width:75px;height:21px;background:linear-gradient(#dadada,#c6c6c6);border:1px solid #8e8e8e;border-bottom:none"></div>
<span class="t" style="left:1354px;top:581px;font-size:14.5px;font-weight:bold;font-family:Noto Sans CJK SC,sans-serif;line-height:21px;height:21px;color:#555">属性</span>
<span class="t" style="left:1430px;top:581px;font-size:14.5px;font-weight:bold;font-family:Noto Sans CJK SC,sans-serif;line-height:21px;height:21px;color:#000">信息</span>
<span class="t" style="left:1512px;top:581px;font-size:14.5px;font-weight:bold;font-family:Noto Sans CJK SC,sans-serif;line-height:21px;height:21px;color:#555">诊断</span>
<svg class="a" style="left:1336px;top:584px" width="16" height="16"><rect x="0.5" y="0.5" width="12" height="12" fill="#f0f2fc" stroke="#8a96d0" stroke-width="1"/><path d="M2 4H5M2 7H4M2 10H5" stroke="#556" stroke-width="1"/><circle cx="8" cy="6.5" r="3.2" fill="#dfe8f8" stroke="#445" stroke-width="1.2"/><path d="M10.5 9L14.5 13.5" stroke="#3a78c0" stroke-width="2.2"/></svg>
<svg class="a" style="left:1412px;top:584px" width="18" height="16"><rect x="1.5" y="0.5" width="10" height="13" fill="#f4f6ff" stroke="#9aa4d8" stroke-width="1"/><path d="M0 3H4.5M2.8 0.6L5.4 3L2.8 5.4" stroke="#10184a" stroke-width="1.5" fill="none"/><rect x="6" y="5" width="2" height="2" fill="#10184a"/><path d="M5.5 8H8V12H9.5V13.3H4.8V12H6.3V9.3H5.5Z" fill="#10184a"/><path d="M8.5 12.5H14M11.8 9.8L14.6 12.5L11.8 15.2" stroke="#10184a" stroke-width="1.6" fill="none"/></svg>
<svg class="a" style="left:1470px;top:585px;" width="14" height="14"><use href="#i-yinfo"/></svg>
<svg class="a" style="left:1494px;top:584px" width="13" height="16"><rect x="0.5" y="0.5" width="11" height="14" fill="#fafbff" stroke="#8a96d0" stroke-width="1"/><path d="M3 3V6.5A2 2 0 0 0 7 6.5V3M5 8.5V10A2 2 0 0 0 8 11.5" stroke="#18206a" stroke-width="1.2" fill="none"/><circle cx="8.8" cy="10.8" r="1.4" fill="#18206a"/></svg>
<svg class="a" style="left:1585px;top:584px" width="12" height="12"><path d="M3 0H11V8H9V2H3Z" fill="#f4f4f4"/><rect x="0" y="3" width="8" height="8" fill="#f4f4f4"/></svg>
<svg class="a" style="left:1603px;top:585px" width="12" height="11"><rect x="0.5" y="0.5" width="10" height="9" fill="none" stroke="#e4e4e4" stroke-width="1"/><path d="M0 3.5H11M0 6.5H11" stroke="#e4e4e4" stroke-width="1"/></svg>
<svg class="a" style="left:1621px;top:587px" width="12" height="7"><path d="M0 0H12L6 6.5Z" fill="#f4f4f4"/></svg>
<div class="a" style="left:336px;top:608px;width:71px;height:21px;background:linear-gradient(#dcdcdc,#cacaca);border:1px solid #8e8e8e;border-bottom:none"></div>
<div class="a" style="left:408px;top:608px;width:95px;height:21px;background:linear-gradient(#dcdcdc,#cacaca);border:1px solid #8e8e8e;border-bottom:none"></div>
<div class="a" style="left:504px;top:608px;width:63px;height:22px;background:#ebebeb;border:1px solid #8e8e8e;border-bottom:none"></div>
<span class="t" style="left:348px;top:607px;font-size:14.5px;font-family:Noto Sans CJK SC,sans-serif;line-height:21px;height:21px;color:#5a5a5a;-webkit-text-stroke:.25px #5a5a5a">常规</span>
<span class="t" style="left:419px;top:607px;font-size:14.5px;font-family:Noto Sans CJK SC,sans-serif;line-height:21px;height:21px;color:#5a5a5a;-webkit-text-stroke:.25px #5a5a5a;letter-spacing:.6px">交叉引用</span>
<span class="t" style="left:516px;top:608px;font-size:14.5px;font-family:Noto Sans CJK SC,sans-serif;line-height:21px;height:21px;color:#000;font-weight:bold">编译</span>
<svg class="a" style="left:389px;top:612px;" width="14" height="14"><use href="#i-yinfo"/></svg>
<svg class="a" style="left:336px;top:635px;" width="16" height="16"><use href="#i-err"/></svg>
<svg class="a" style="left:360px;top:635px;" width="16" height="16"><use href="#i-warn"/></svg>
<div class="a" style="left:382px;top:632px;width:22px;height:22px;background:#f4f6ff;border:1px solid #3c62c8;border-radius:2px"></div>
<svg class="a" style="left:385px;top:635px;" width="16" height="16"><use href="#i-info"/></svg>
<div class="a" style="left:408px;top:635px;width:199px;height:18px;background:#fff;border:1px solid #8e8e8e"></div>
<div class="a" style="left:592px;top:636px;width:14px;height:16px;background:linear-gradient(#f4f4f4,#d8d8d8);border:1px solid #8e8e8e;border-width:0 0 0 1px"></div>
<svg class="a" style="left:596px;top:642px" width="8" height="5"><path d="M0 0H8L4 4.5Z" fill="#111"/></svg>
<span class="t" style="left:413px;top:634px;font-size:13px;color:#000;font-family:'Noto Sans CJK SC',sans-serif">显示所有消息</span>
<span class="t c" style="left:342px;top:659px;color:#111;letter-spacing:0">编译完成（错误：1；警告：0）</span>
<div class="a" style="left:330px;top:677px;width:1308px;height:19px;background:linear-gradient(#eff2f2,#d8dcdc);border-top:1px solid #c0c0c0;border-bottom:1px solid #b4b4b4"></div>
<div class="a" style="left:358px;top:678px;width:1px;height:17px;background:#b0b4b8;"></div>
<div class="a" style="left:359px;top:678px;width:1px;height:17px;background:#f8f8f8;"></div>
<div class="a" style="left:556px;top:678px;width:1px;height:17px;background:#b0b4b8;"></div>
<div class="a" style="left:557px;top:678px;width:1px;height:17px;background:#f8f8f8;"></div>
<div class="a" style="left:908px;top:678px;width:1px;height:17px;background:#b0b4b8;"></div>
<div class="a" style="left:909px;top:678px;width:1px;height:17px;background:#f8f8f8;"></div>
<div class="a" style="left:958px;top:678px;width:1px;height:17px;background:#b0b4b8;"></div>
<div class="a" style="left:959px;top:678px;width:1px;height:17px;background:#f8f8f8;"></div>
<div class="a" style="left:1008px;top:678px;width:1px;height:17px;background:#b0b4b8;"></div>
<div class="a" style="left:1009px;top:678px;width:1px;height:17px;background:#f8f8f8;"></div>
<div class="a" style="left:1062px;top:678px;width:1px;height:17px;background:#b0b4b8;"></div>
<div class="a" style="left:1063px;top:678px;width:1px;height:17px;background:#f8f8f8;"></div>
<div class="a" style="left:1132px;top:678px;width:1px;height:17px;background:#b0b4b8;"></div>
<div class="a" style="left:1133px;top:678px;width:1px;height:17px;background:#f8f8f8;"></div>
<div class="a" style="left:1212px;top:678px;width:1px;height:17px;background:#b0b4b8;"></div>
<div class="a" style="left:1213px;top:678px;width:1px;height:17px;background:#f8f8f8;"></div>
<div class="a" style="left:1213px;top:678px;width:425px;height:17px;background:linear-gradient(#dcdcdc,#c8c8c8);"></div>
<span class="t" style="left:362px;top:676px;font-size:12.5px;color:#000;letter-spacing:1px;font-family:'Noto Sans CJK SC',sans-serif">路径</span>
<span class="t" style="left:561px;top:676px;font-size:12.5px;color:#000;letter-spacing:1px;font-family:'Noto Sans CJK SC',sans-serif">说明</span>
<span class="t" style="left:911px;top:676px;font-size:12.5px;color:#000;letter-spacing:1px;font-family:'Noto Sans CJK SC',sans-serif">转至</span>
<span class="t" style="left:1013px;top:676px;font-size:12.5px;color:#000;letter-spacing:1px;font-family:'Noto Sans CJK SC',sans-serif">错误</span>
<span class="t" style="left:1067px;top:676px;font-size:12.5px;color:#000;letter-spacing:1px;font-family:'Noto Sans CJK SC',sans-serif">警告</span>
<span class="t" style="left:1137px;top:676px;font-size:12.5px;color:#000;letter-spacing:1px;font-family:'Noto Sans CJK SC',sans-serif">时间</span>
<span class="t " style="left:337px;top:677px;color:#555">!</span>
<span class="t " style="left:962px;top:677px;color:#333">?</span>
<div class="a" style="left:330px;top:697px;width:882px;height:18px;background:#e0e0e0;"></div>
<div class="a" style="left:330px;top:715px;width:1308px;height:1px;background:#f7f7f7;"></div>
<svg class="a" style="left:336px;top:698px;" width="16" height="16"><use href="#i-err"/></svg>
<svg class="a" style="left:364px;top:703px" width="9" height="5"><path d="M0 0H8.6L4.3 4.6Z" fill="#111"/></svg>
<span class="t " style="left:382px;top:697px;color:#222;letter-spacing:0">FormmingMachine</span>
<svg class="a" style="left:925px;top:699px;--m:#5a5a5a;--d:#333" width="13" height="13"><use href="#i-goto"/></svg>
<span class="t " style="left:1013px;top:697px;color:#222">1</span>
<span class="t " style="left:1067px;top:697px;color:#222">0</span>
<span class="t " style="left:1137px;top:697px;color:#222">16:57:23</span>
<div class="a" style="left:330px;top:716px;width:882px;height:18px;background:#eeeeee;"></div>
<div class="a" style="left:330px;top:734px;width:1308px;height:1px;background:#f7f7f7;"></div>
<svg class="a" style="left:336px;top:717px;" width="16" height="16"><use href="#i-err"/></svg>
<svg class="a" style="left:382px;top:722px" width="9" height="5"><path d="M0 0H8.6L4.3 4.6Z" fill="#111"/></svg>
<span class="t " style="left:400px;top:716px;color:#222;letter-spacing:0">FormingMachine</span>
<svg class="a" style="left:925px;top:718px;--m:#5a5a5a;--d:#333" width="13" height="13"><use href="#i-goto"/></svg>
<span class="t " style="left:1013px;top:716px;color:#222">1</span>
<span class="t " style="left:1067px;top:716px;color:#222">0</span>
<span class="t " style="left:1137px;top:716px;color:#222">16:57:23</span>
<div class="a" style="left:330px;top:735px;width:882px;height:18px;background:#eeeeee;"></div>
<div class="a" style="left:330px;top:753px;width:1308px;height:1px;background:#f7f7f7;"></div>
<svg class="a" style="left:336px;top:736px;" width="16" height="16"><use href="#i-err"/></svg>
<svg class="a" style="left:400px;top:741px" width="9" height="5"><path d="M0 0H8.6L4.3 4.6Z" fill="#111"/></svg>
<span class="t " style="left:418px;top:735px;color:#222;letter-spacing:0">PLC_FormingMachine</span>
<svg class="a" style="left:925px;top:737px;--m:#5a5a5a;--d:#333" width="13" height="13"><use href="#i-goto"/></svg>
<span class="t " style="left:1013px;top:735px;color:#222">1</span>
<span class="t " style="left:1067px;top:735px;color:#222">0</span>
<span class="t " style="left:1137px;top:735px;color:#222">16:57:23</span>
<div class="a" style="left:330px;top:754px;width:882px;height:18px;background:#d3dbe3;"></div>
<div class="a" style="left:330px;top:772px;width:1308px;height:1px;background:#f7f7f7;"></div>
<svg class="a" style="left:336px;top:755px;" width="16" height="16"><use href="#i-info"/></svg>
<span class="t " style="left:436px;top:754px;color:#222;letter-spacing:0">Safety</span>
<div class="a" style="left:556px;top:754px;width:352px;height:18px;background:transparent;border:1px dotted #666"></div>
<span class="t " style="left:561px;top:754px;color:#222;letter-spacing:0">Compile safety program &#x27;Safety Administration&#x27;.</span>
<svg class="a" style="left:925px;top:756px;--m:#189a28;--d:#0c6a18" width="13" height="13"><use href="#i-goto"/></svg>
<span class="t " style="left:1137px;top:754px;color:#222">16:57:24</span>
<div class="a" style="left:330px;top:791px;width:1308px;height:1px;background:#f6f6f6;"></div>
<div class="a" style="left:330px;top:810px;width:1308px;height:1px;background:#f6f6f6;"></div>
<div class="a" style="left:330px;top:829px;width:1308px;height:1px;background:#f6f6f6;"></div>
<div class="a" style="left:330px;top:848px;width:1308px;height:1px;background:#f6f6f6;"></div>
<svg class="a" style="left:-8px;top:-4px" width="16" height="16"><rect x="0" y="0" width="16" height="16" fill="#1f6fe0"/><rect x="14.5" y="0" width="1.5" height="16" fill="#0c48b0"/><rect x="0" y="14.5" width="16" height="1.5" fill="#0c48b0"/><rect x="3" y="0" width="10" height="7" fill="#d8ecff"/><rect x="4" y="10" width="8" height="4.5" fill="#8ccaf8"/><rect x="9" y="10.5" width="2.5" height="4" fill="#e8f4ff"/></svg>
<span class="t" style="left:15px;top:-5px;font-size:13px;color:#000;font-family:Noto Sans CJK SC,sans-serif;line-height:16px;height:16px">保存项目</span>
<svg class="a" style="left:78px;top:-3px" width="16" height="16"><rect x="3.5" y="0" width="9" height="9.5" fill="#fff" stroke="#556" stroke-width="1"/><rect x="5" y="3" width="6" height="1.1" fill="#10184a"/><rect x="5" y="5" width="6" height="1.1" fill="#10184a"/><rect x="5" y="7" width="6" height="1.1" fill="#10184a"/><rect x="0.5" y="9" width="15" height="6.5" rx="2" fill="#3c58e8"/><rect x="1" y="9.5" width="14" height="2" rx="1" fill="#6a84f8"/><rect x="1.5" y="13.5" width="13" height="2" rx="1" fill="#2434b8"/></svg>
<div class="a" style="left:99px;top:0;height:16px;width:0;border-left:1px dotted #9a9a9a"></div>
<div class="a" style="left:200px;top:0;height:16px;width:0;border-left:1px dotted #9a9a9a"></div>
<div class="a" style="left:275px;top:0;height:16px;width:0;border-left:1px dotted #9a9a9a"></div>
<div class="a" style="left:400px;top:0;height:16px;width:0;border-left:1px dotted #9a9a9a"></div>
<div class="a" style="left:569px;top:0;height:16px;width:0;border-left:1px dotted #9a9a9a"></div>
<div class="a" style="left:647px;top:0;height:16px;width:0;border-left:1px dotted #9a9a9a"></div>
<div class="a" style="left:676px;top:0;height:16px;width:0;border-left:1px dotted #9a9a9a"></div>
<div class="a" style="left:729px;top:0;height:16px;width:0;border-left:1px dotted #9a9a9a"></div>
<svg class="a" style="left:108px;top:-4px" width="14" height="17"><path d="M3.2 0L8.6 11.2M10.8 0L5.4 11.2" stroke="#6a6a6a" stroke-width="1.7"/><circle cx="3.2" cy="13.3" r="1.9" fill="none" stroke="#6a6a6a" stroke-width="1.3"/><circle cx="10.8" cy="13.3" r="1.9" fill="none" stroke="#6a6a6a" stroke-width="1.3"/></svg>
<svg class="a" style="left:131px;top:-4px" width="16" height="17"><rect x="0.5" y="0.5" width="8.5" height="13" fill="#f8f8f8" stroke="#b0b0b0" stroke-width="1"/><rect x="2" y="4" width="3" height="1.1" fill="#222"/><rect x="2" y="6" width="3" height="1.1" fill="#222"/><rect x="2" y="8" width="3" height="1.1" fill="#222"/><rect x="2" y="10" width="3" height="1.1" fill="#222"/><rect x="5.5" y="2.5" width="9" height="12.5" fill="#fcfcfc" stroke="#b0b0b0" stroke-width="1"/><rect x="7" y="5" width="6" height="1.1" fill="#222"/><rect x="7" y="7" width="6" height="1.1" fill="#222"/><rect x="7" y="9" width="6" height="1.1" fill="#222"/><rect x="7" y="11" width="6" height="1.1" fill="#222"/><rect x="7" y="13" width="6" height="1.1" fill="#222"/></svg>
<svg class="a" style="left:155px;top:-4px" width="16" height="17"><rect x="0.5" y="0.5" width="9" height="12.5" fill="#dedede" stroke="#c0c0c0" stroke-width="1"/><rect x="6.5" y="6" width="8.5" height="9" fill="#fcfcfc" stroke="#a8a8a8" stroke-width="1"/><rect x="8" y="8" width="5.5" height="1.1" fill="#222"/><rect x="8" y="10" width="5.5" height="1.1" fill="#222"/><rect x="8" y="12" width="5.5" height="1.1" fill="#222"/></svg>
<svg class="a" style="left:180px;top:-2px" width="14" height="14"><path d="M1.2 0.5L12 12.3M12 0.5L1.2 12.3" stroke="#2a2a2a" stroke-width="1.8"/></svg>
<svg class="a" style="left:206px;top:-3px" width="17" height="16"><path d="M5 4.2H10A4.8 4.8 0 0 1 13 12.5L10.5 14.5" stroke="#2040d0" stroke-width="2.8" fill="none"/><path d="M0.5 4.2L7 -0.5V9Z" fill="#2040d0"/></svg>
<svg class="a" style="left:227px;top:-3px" width="8" height="14"><rect x="3" y="0" width="2" height="6" fill="#111"/><path d="M0.3 4.5H7.7L4 9Z" fill="#111"/><rect x="0.5" y="11" width="7" height="2" fill="#111"/></svg>
<svg class="a" style="left:241px;top:-3px" width="17" height="16"><path d="M12 4.2H7A4.8 4.8 0 0 0 4 12.5L6.5 14.5" stroke="#858585" stroke-width="2.8" fill="none"/><path d="M16.5 4.2L10 -0.5V9Z" fill="#858585"/></svg>
<svg class="a" style="left:261px;top:-3px" width="8" height="14"><rect x="3" y="0" width="2" height="6" fill="#a6a6a6"/><path d="M0.3 4.5H7.7L4 9Z" fill="#a6a6a6"/><rect x="0.5" y="11" width="7" height="2" fill="#a6a6a6"/></svg>
<svg class="a" style="left:283px;top:-4px" width="16" height="17"><rect x="0.5" y="0.5" width="9" height="8" fill="#f4f4f4" stroke="#9a9a9a" stroke-width="1"/><rect x="2.5" y="3" width="5" height="1" fill="#555"/><rect x="3.5" y="6.5" width="11.5" height="8.5" fill="#fcfcfc" stroke="#9a9a9a" stroke-width="1"/><rect x="6" y="9" width="3.2" height="4.2" fill="none" stroke="#111" stroke-width="1.1"/><rect x="11" y="8.5" width="1.4" height="5.2" fill="#111"/></svg>
<svg class="a" style="left:307px;top:-4px" width="16" height="17"><rect x="0" y="0" width="7" height="14" fill="#9c9c9c"/><rect x="2" y="0" width="1.5" height="14" fill="#c4c4c4"/><rect x="7" y="0" width="8.5" height="14" fill="#8e8e8e"/><rect x="0" y="14" width="15.5" height="1.6" fill="#767676"/><rect x="9.2" y="0" width="3" height="9" fill="#fff"/><path d="M6.4 8.5H15L10.7 14.3Z" fill="#fff"/></svg>
<svg class="a" style="left:331px;top:-4px" width="16" height="17"><rect x="0" y="0" width="7" height="14" fill="#9c9c9c"/><rect x="2" y="0" width="1.5" height="14" fill="#c4c4c4"/><rect x="7" y="0" width="8.5" height="14" fill="#8e8e8e"/><rect x="0" y="14" width="15.5" height="1.6" fill="#767676"/><rect x="9.2" y="7" width="3" height="7" fill="#fff"/><path d="M6.4 8.6H15L10.7 2.6Z" fill="#fff"/></svg>
<svg class="a" style="left:356px;top:-4px" width="15" height="17"><rect x="0.5" y="0" width="13.5" height="12" fill="#2c4a8c"/><rect x="2" y="0" width="10.5" height="10" fill="#2a86e0"/><rect x="4" y="0" width="6" height="7.5" fill="#58c8f0"/><rect x="6" y="0" width="2" height="6" fill="#1c3a7c"/><rect x="0.5" y="12" width="13.5" height="1.4" fill="#9ab0d0"/><rect x="0.5" y="13.4" width="13.5" height="2.2" fill="#2c3c68"/><rect x="1.5" y="14" width="2" height="1" fill="#50d070"/></svg>
<svg class="a" style="left:379px;top:-4px" width="17" height="17"><rect x="0" y="0" width="3.5" height="12" fill="#8e8e8e"/><path d="M4.5 1L14 5.2L4.5 9.5Z" fill="#f0f0f0" stroke="#9a9a9a" stroke-width="1"/><text x="4" y="16" font-family="Liberation Sans,sans-serif" font-size="7.5" font-weight="bold" fill="#222">RT</text></svg>
<svg class="a" style="left:404px;top:-5px" width="18" height="18"><path d="M1.5 16.5L5 12.5" stroke="#e05010" stroke-width="2.4" stroke-linecap="round"/><path d="M3.6 11C2.6 6.5 8 1 17 -1C17.5 8 12.5 14.5 8 14.5C6 14.5 4.2 13 3.6 11Z" fill="#f26818" stroke="#d04808" stroke-width=".8"/><path d="M6.2 4.2L14.6 11.8" stroke="#fff" stroke-width="1.7"/><path d="M7 3.5C9 1.8 12 .4 15.5 0" stroke="#ffb070" stroke-width="1.2" fill="none"/></svg>
<span class="t" style="left:427px;top:-5px;font-size:13px;color:#000;font-family:Noto Sans CJK SC,sans-serif;line-height:16px;height:16px">转至在线</span>
<svg class="a" style="left:486px;top:-5px" width="18" height="18"><path d="M1.5 16.5L5 12.5" stroke="#8a8a8a" stroke-width="2.4" stroke-linecap="round"/><path d="M3.6 11C2.6 6.5 8 1 17 -1C17.5 8 12.5 14.5 8 14.5C6 14.5 4.2 13 3.6 11Z" fill="#9c9c9c" stroke="#7c7c7c" stroke-width=".8"/><path d="M7 6.5L9.8 9.2M9.6 3.8L12.4 6.6" stroke="#fff" stroke-width="1.7"/></svg>
<span class="t" style="left:510px;top:-5px;font-size:13px;color:#000;font-family:Noto Sans CJK SC,sans-serif;line-height:16px;height:16px;color:#8a8a8a">转至离线</span>
<svg class="a" style="left:576px;top:-1px" width="17" height="14"><rect x="1" y="3" width="4" height="9" fill="#30c0d0" stroke="#226" stroke-width="1"/><rect x="7" y="3" width="4" height="9" fill="#30c0d0" stroke="#226" stroke-width="1"/><text x="11.5" y="12.5" font-family="Liberation Sans,sans-serif" font-size="11" font-weight="bold" fill="#114">?</text></svg>
<svg class="a" style="left:600px;top:-1px" width="17" height="14"><rect x="0" y="0" width="7" height="12" fill="#9a9a9a"/><rect x="0" y="11" width="16" height="2" fill="#777"/><path d="M9 3L15.5 7.5L9 12Z" fill="#eee" stroke="#666" stroke-width="1"/></svg>
<svg class="a" style="left:624px;top:-1px" width="17" height="14"><rect x="0" y="0" width="7" height="12" fill="#9a9a9a"/><rect x="0" y="11" width="16" height="2" fill="#777"/><rect x="9.5" y="5.5" width="6" height="6" fill="#eee" stroke="#555" stroke-width="1"/></svg>
<svg class="a" style="left:654px;top:-1px" width="15" height="15"><path d="M3.5 0L13.5 9.5M13.5 0L3.5 9.5" stroke="#222" stroke-width="2"/><rect x="0.5" y="7.5" width="4.5" height="3.5" fill="#eee" stroke="#777" stroke-width="1"/></svg>
<svg class="a" style="left:683px;top:-3px" width="16" height="16"><rect x="0.5" y="0" width="14" height="14" fill="#f0f2ff" stroke="#7a84d0" stroke-width="1"/><rect x="1" y="12" width="13" height="2" fill="#8a94e0"/></svg>
<svg class="a" style="left:707px;top:-3px" width="16" height="16"><rect x="0.5" y="0" width="14" height="14" fill="#f0f2ff" stroke="#7a84d0" stroke-width="1"/><rect x="7" y="0" width="1.4" height="14" fill="#6a74d0"/><rect x="1" y="12" width="13" height="2" fill="#8a94e0"/></svg>
<div class="a" style="left:735px;top:-3px;width:121px;height:16px;background:#fff;border:1px solid #a4a4a4"></div>
<span class="t" style="left:738px;top:-3px;font-size:13px;color:#000;font-family:Noto Sans CJK SC,sans-serif;line-height:16px;height:16px;font-size:12.5px;color:#9a9a9a">&lt;在项目中搜索&gt;</span>
<svg class="a" style="left:864px;top:1px" width="18" height="12"><rect x="0" y="2" width="5" height="1.5" fill="#7a84c8"/><rect x="5" y="3" width="4.5" height="8.5" fill="#141c78"/><rect x="11.5" y="3" width="4.5" height="8.5" fill="#141c78"/><rect x="9" y="5" width="3" height="3" fill="#141c78"/><rect x="6" y="0.5" width="2.5" height="3" fill="#3a44a8"/><rect x="12.5" y="0.5" width="2.5" height="3" fill="#3a44a8"/></svg>
<div class="a" style="left:510px;top:-4px;width:754px;height:8.5px;background:rgba(58,58,58,.84);border-radius:0 0 4px 4px;box-shadow:0 0 3px rgba(0,0,0,.35)"></div>
<span class="t" style="left:-4px;top:19px;font-size:15px;font-weight:bold;color:#fff;font-family:'Noto Sans CJK SC',sans-serif;line-height:22px;height:22px">树</span>
<span class="t" style="left:-9px;top:48px;font-size:15px;font-weight:bold;color:#000;font-family:'Noto Sans CJK SC',sans-serif;line-height:20px;height:20px">备</span>
<svg class="a" style="left:292px;top:25px" width="11" height="12"><rect x="0.5" y="0.5" width="3" height="10" fill="none" stroke="#f0f0f0" stroke-width="1"/><path d="M5.5 0V11M7.5 0V11M9.5 0V11" stroke="#dcdcdc" stroke-width="1"/></svg>
<svg class="a" style="left:313px;top:25px" width="7" height="12"><path d="M7 0V12L0 6Z" fill="#fff"/></svg>
<div class="a" style="left:270px;top:73px;height:23px;width:0;border-left:1px dotted #9a9a9a"></div>
<div class="a" style="left:275px;top:73px;width:22px;height:22px;background:#fbfcff;border:1.5px solid #4668b8;border-radius:2.5px"></div>
<svg class="a" style="left:279px;top:77px" width="15" height="15"><rect x="0.5" y="0.5" width="13" height="13" fill="#fff" stroke="#8c94dc" stroke-width="1"/><rect x="1" y="1" width="12" height="2" fill="#cdd2f4"/><rect x="1" y="3" width="12" height="1" fill="#8a8a98"/><rect x="1" y="10.5" width="12" height="1" fill="#8a8a98"/><rect x="1" y="11.5" width="12" height="1.6" fill="#949ce4"/><g fill="#4a4a4a"><rect x="2" y="4.8" width="2.4" height="1"/><rect x="5.5" y="4.8" width="3" height="1"/><rect x="9.5" y="4.8" width="2.6" height="1"/><rect x="2" y="6.8" width="2.4" height="1"/><rect x="5.5" y="6.8" width="3" height="1"/><rect x="9.5" y="6.8" width="2.6" height="1"/><rect x="2" y="8.8" width="2.4" height="1"/><rect x="5.5" y="8.8" width="3" height="1"/><rect x="9.5" y="8.8" width="2.6" height="1"/></g></svg>
<svg class="a" style="left:302px;top:75px" width="18" height="18"><rect x="0.5" y="4.5" width="11.5" height="11" fill="#fffdf4" stroke="#8a8a8a" stroke-width="1"/><rect x="0" y="4" width="12.5" height="1.8" fill="#14246c"/><rect x="0" y="14.8" width="12.5" height="1.4" fill="#14246c"/><g fill="#f4b060"><rect x="1.6" y="7" width="2.4" height="1.6"/><rect x="5" y="7" width="2.4" height="1.6"/><rect x="8.4" y="7" width="2.4" height="1.6"/><rect x="1.6" y="11" width="2.4" height="1.6"/><rect x="5" y="11" width="2.4" height="1.6"/><rect x="8.4" y="11" width="2.4" height="1.6"/></g><g fill="#1a0a0a"><rect x="1.6" y="8.6" width="2.4" height="1.3"/><rect x="5" y="8.6" width="2.4" height="1.3"/><rect x="8.4" y="8.6" width="2.4" height="1.3"/></g><g fill="#a01010"><rect x="1.6" y="12.6" width="2.4" height="1.3"/><rect x="5" y="12.6" width="2.4" height="1.3"/><rect x="8.4" y="12.6" width="2.4" height="1.3"/></g><path d="M6 1.2C10 -0.2 13.2 2 13 6.2H16.2L11.6 11.6L7.6 6.2H10.2C10.4 4 9 2.6 6.4 3Z" fill="#1d9a2c" stroke="#0c6a18" stroke-width=".5"/></svg>
</body></html>
